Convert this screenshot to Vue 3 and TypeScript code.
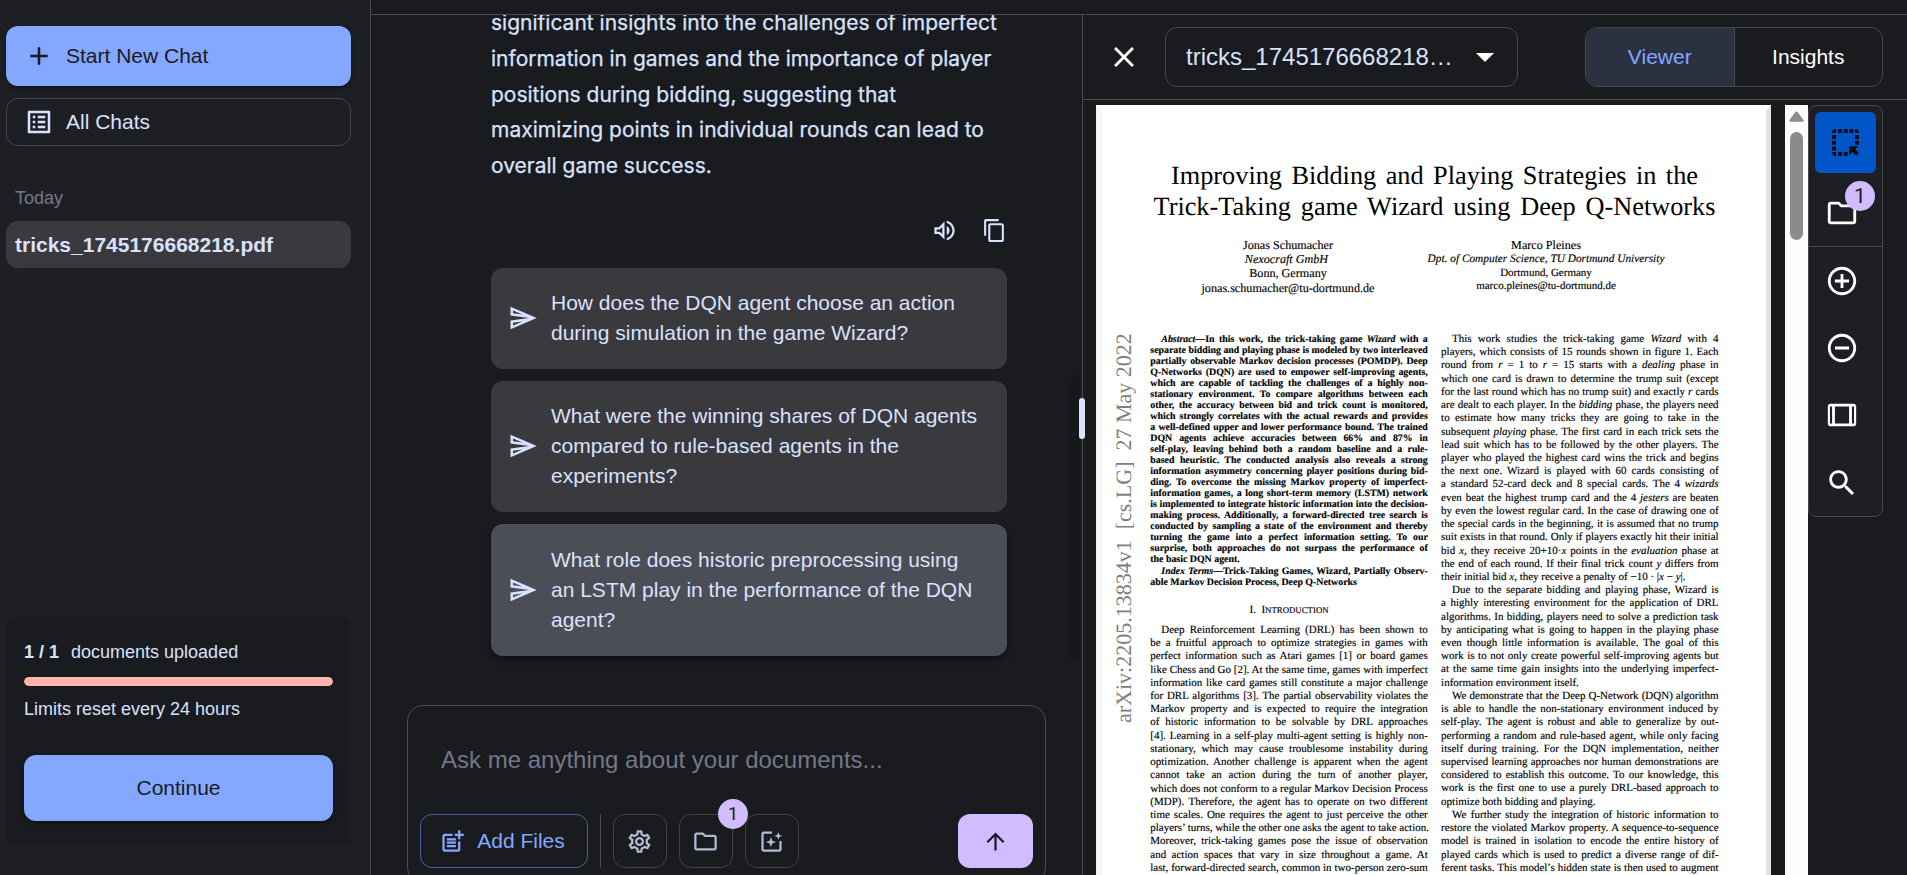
<script setup lang="ts">
import { computed, ref } from 'vue'

interface Segment { text: string; italic: boolean }
interface Line { segments: Segment[]; indent: boolean; last: boolean }

// Typeset line markup: "*x*" is italic, a leading ">" indents, a trailing "|" ends a paragraph.
function parse(raw: string): Line {
  const indent = raw.startsWith('>')
  const last = raw.endsWith('|')
  const body = raw.slice(indent ? 1 : 0, last ? -1 : undefined)
  const segments = body
    .split('*')
    .map((text, i) => ({ text, italic: i % 2 === 1 }))
    .filter((s) => s.text.length > 0)
  return { segments, indent, last }
}

const fileName = 'tricks_1745176668218'
const documentCount = ref(1)
const documentLimit = 1
const usage = computed(() => `${(documentCount.value / documentLimit) * 100}%`)

const answer = [
  'significant insights into the challenges of imperfect',
  'information in games and the importance of player',
  'positions during bidding, suggesting that',
  'maximizing points in individual rounds can lead to',
  'overall game success.',
]

const suggestions = [
  ['How does the DQN agent choose an action', 'during simulation in the game Wizard?'],
  ['What were the winning shares of DQN agents', 'compared to rule-based agents in the', 'experiments?'],
  ['What role does historic preprocessing using', 'an LSTM play in the performance of the DQN', 'agent?'],
]

const abstractLines = [
  '>*Abstract*—In this work, the trick-taking game *Wizard* with a',
  'separate bidding and playing phase is modeled by two interleaved',
  'partially observable Markov decision processes (POMDP). Deep',
  'Q-Networks (DQN) are used to empower self-improving agents,',
  'which are capable of tackling the challenges of a highly non-',
  'stationary environment. To compare algorithms between each',
  'other, the accuracy between bid and trick count is monitored,',
  'which strongly correlates with the actual rewards and provides',
  'a well-defined upper and lower performance bound. The trained',
  'DQN agents achieve accuracies between 66% and 87% in',
  'self-play, leaving behind both a random baseline and a rule-',
  'based heuristic. The conducted analysis also reveals a strong',
  'information asymmetry concerning player positions during bid-',
  'ding. To overcome the missing Markov property of imperfect-',
  'information games, a long short-term memory (LSTM) network',
  'is implemented to integrate historic information into the decision-',
  'making process. Additionally, a forward-directed tree search is',
  'conducted by sampling a state of the environment and thereby',
  'turning the game into a perfect information setting. To our',
  'surprise, both approaches do not surpass the performance of',
  'the basic DQN agent.|',
].map(parse)

const indexLines = [
  '>*Index Terms*—Trick-Taking Games, Wizard, Partially Observ-',
  'able Markov Decision Process, Deep Q-Networks|',
].map(parse)

const introLines = [
  '>Deep Reinforcement Learning (DRL) has been shown to',
  'be a fruitful approach to optimize strategies in games with',
  'perfect information such as Atari games [1] or board games',
  'like Chess and Go [2]. At the same time, games with imperfect',
  'information like card games still constitute a major challenge',
  'for DRL algorithms [3]. The partial observability violates the',
  'Markov property and is expected to require the integration',
  'of historic information to be solvable by DRL approaches',
  '[4]. Learning in a self-play multi-agent setting is highly non-',
  'stationary, which may cause troublesome instability during',
  'optimization. Another challenge is apparent when the agent',
  'cannot take an action during the turn of another player,',
  'which does not conform to a regular Markov Decision Process',
  '(MDP). Therefore, the agent has to operate on two different',
  'time scales. One requires the agent to just perceive the other',
  'players’ turns, while the other one asks the agent to take action.',
  'Moreover, trick-taking games pose the issue of observation',
  'and action spaces that vary in size throughout a game. At',
  'last, forward-directed search, common in two-person zero-sum',
].map(parse)

const rightLines = [
  '>This work studies the trick-taking game *Wizard* with 4',
  'players, which consists of 15 rounds shown in figure 1. Each',
  'round from *r* = 1 to *r* = 15 starts with a *dealing* phase in',
  'which one card is drawn to determine the trump suit (except',
  'for the last round which has no trump suit) and exactly *r* cards',
  'are dealt to each player. In the *bidding* phase, the players need',
  'to estimate how many tricks they are going to take in the',
  'subsequent *playing* phase. The first card in each trick sets the',
  'lead suit which has to be followed by the other players. The',
  'player who played the highest card wins the trick and begins',
  'the next one. Wizard is played with 60 cards consisting of',
  'a standard 52-card deck and 8 special cards. The 4 *wizards*',
  'even beat the highest trump card and the 4 *jesters* are beaten',
  'by even the lowest regular card. In the case of drawing one of',
  'the special cards in the beginning, it is assumed that no trump',
  'suit exists in that round. Only if players exactly hit their initial',
  'bid *x*, they receive 20+10·*x* points in the *evaluation* phase at',
  'the end of each round. If their final trick count *y* differs from',
  'their initial bid *x*, they receive a penalty of −10 · |*x* − *y*|.|',
  '>Due to the separate bidding and playing phase, Wizard is',
  'a highly interesting environment for the application of DRL',
  'algorithms. In bidding, players need to solve a prediction task',
  'by anticipating what is going to happen in the playing phase',
  'even though little information is available. The goal of this',
  'work is to not only create powerful self-improving agents but',
  'at the same time gain insights into the underlying imperfect-',
  'information environment itself.|',
  '>We demonstrate that the Deep Q-Network (DQN) algorithm',
  'is able to handle the non-stationary environment induced by',
  'self-play. The agent is robust and able to generalize by out-',
  'performing a random and rule-based agent, while only facing',
  'itself during training. For the DQN implementation, neither',
  'supervised learning approaches nor human demonstrations are',
  'considered to establish this outcome. To our knowledge, this',
  'work is the first one to use a purely DRL-based approach to',
  'optimize both bidding and playing.|',
  '>We further study the integration of historic information to',
  'restore the violated Markov property. A sequence-to-sequence',
  'model is trained in isolation to encode the entire history of',
  'played cards which is used to predict a diverse range of dif-',
  'ferent tasks. This model’s hidden state is then used to augment',
].map(parse)

const leftBlocks = [
  { cls: 'abstract', lines: abstractLines },
  { cls: 'abstract index', lines: indexLines },
]
</script>

<template>
  <div class="app">
    <aside class="sidebar">
      <button class="btn primary new-chat">
        <svg class="i30" viewBox="0 0 24 24"><path d="M19 13h-6v6h-2v-6H5v-2h6V5h2v6h6z" /></svg>
        <span>Start New Chat</span>
      </button>
      <button class="btn outline all-chats">
        <svg class="i30" viewBox="0 0 24 24"><path d="M11 7h6v2h-6zm0 4h6v2h-6zm0 4h6v2h-6zM7 7h2v2H7zm0 4h2v2H7zm0 4h2v2H7zM20.1 3H3.9c-.5 0-.9.4-.9.9v16.2c0 .4.4.9.9.9h16.2c.4 0 .9-.5.9-.9V3.9c0-.5-.5-.9-.9-.9M19 19H5V5h14z" /></svg>
        <span>All Chats</span>
      </button>
      <div class="group">Today</div>
      <div class="history">{{ fileName }}.pdf</div>
      <div class="spacer"></div>
      <section class="limits">
        <div class="count"><b>{{ documentCount }} / {{ documentLimit }}</b><span>documents uploaded</span></div>
        <div class="bar"><div class="fill" :style="{ width: usage }"></div></div>
        <div class="reset">Limits reset every 24 hours</div>
        <button class="btn primary continue">Continue</button>
      </section>
    </aside>

    <main class="main">
      <div class="strip"></div>
      <div class="split">
        <section class="chat">
          <div class="messages">
            <div class="answer"><div v-for="l in answer" :key="l">{{ l }}</div></div>
            <div class="actions">
              <svg class="speak" viewBox="0 0 24 24"><path d="M3 9v6h4l5 5V4L7 9zm7-.17v6.34L7.83 13H5v-2h2.83zM16.5 12c0-1.77-1.02-3.29-2.5-4.03v8.05c1.48-.73 2.5-2.25 2.5-4.02M14 3.23v2.06c2.89.86 5 3.54 5 6.71s-2.11 5.85-5 6.71v2.06c4.01-.91 7-4.49 7-8.77s-2.99-7.86-7-8.77" /></svg>
              <svg class="copy" viewBox="0 0 24 24"><path d="M16 1H4c-1.1 0-2 .9-2 2v14h2V3h12zm3 4H8c-1.1 0-2 .9-2 2v14c0 1.1.9 2 2 2h11c1.1 0 2-.9 2-2V7c0-1.100-.9-2-2-2m0 16H8V7h11z" /></svg>
            </div>
            <div class="suggestions">
              <div v-for="(s, i) in suggestions" :key="i" class="card" :class="{ hovered: i === 2 }">
                <svg class="i30" viewBox="0 0 24 24"><path d="m4.010 6.030 7.510 3.220-7.520-1zm7.500 8.720L4 17.970v-2.220zM2.010 3 2 10l15 2-15 2 .010 7L23 12z" /></svg>
                <div><div v-for="l in s" :key="l">{{ l }}</div></div>
              </div>
            </div>
          </div>
          <div class="composer">
            <div class="placeholder">Ask me anything about your documents...</div>
            <div class="tools">
              <button class="btn add">
                <svg class="i27" viewBox="0 0 24 24"><path d="M17 19.220H5V7h7V5H5c-1.100 0-2 .9-2 2v12c0 1.100.9 2 2 2h12c1.100 0 2-.9 2-2v-7h-2z" /><path d="M19 2h-2v3h-3v2h3v2.990h2V7h3V5h-3zM7 9h8v2H7zm0 3v2h8v-2zm0 3h8v2H7z" /></svg>
                <span>Add Files</span>
              </button>
              <i class="rule"></i>
              <button class="btn square">
                <svg class="i27" viewBox="0 0 24 24"><path d="M19.430 12.980c.04-.32.070-.64.070-.98s-.03-.66-.07-.98l2.110-1.650c.19-.15.24-.42.12-.64l-2-3.460c-.09-.16-.26-.25-.44-.25-.06 0-.12.010-.17.030l-2.490 1c-.52-.4-1.080-.73-1.690-.98l-.38-2.650C14.460 2.180 14.250 2 14 2h-4c-.25 0-.46.18-.49.42l-.38 2.650c-.61.25-1.170.59-1.690.98l-2.490-1c-.06-.02-.12-.03-.18-.03-.17 0-.34.090-.43.250l-2 3.460c-.13.22-.07.49.12.64l2.110 1.650c-.04.32-.07.65-.07.98s.03.66.07.98l-2.110 1.650c-.19.15-.24.42-.12.64l2 3.460c.09.16.26.25.44.25.06 0 .12-.01.17-.03l2.490-1c.52.4 1.080.73 1.690.98l.38 2.650c.03.24.24.42.49.42h4c.25 0 .46-.18.49-.42l.38-2.650c.61-.25 1.170-.59 1.690-.98l2.490 1c.06.020.12.030.18.030.17 0 .34-.09.43-.25l2-3.460c.12-.22.070-.49-.12-.64zm-1.980-1.710c.04.31.050.52.050.73s-.02.43-.05.73l-.14 1.130.89.7 1.080.84-.7 1.210-1.270-.51-1.040-.42-.9.680c-.43.32-.84.56-1.250.73l-1.060.43-.16 1.130-.2 1.350h-1.400l-.19-1.350-.16-1.130-1.060-.43c-.43-.18-.83-.41-1.230-.71l-.91-.7-1.060.43-1.270.51-.7-1.210 1.080-.84.89-.7-.14-1.130c-.03-.31-.05-.54-.05-.74s.02-.43.05-.73l.14-1.130-.89-.7-1.080-.84.7-1.210 1.270.51 1.040.42.9-.68c.43-.32.84-.56 1.250-.73l1.060-.43.16-1.130.2-1.350h1.390l.19 1.350.16 1.130 1.060.43c.43.18.83.41 1.230.71l.91.7 1.060-.43 1.270-.51.7 1.210-1.070.85-.89.7zM12 8c-2.210 0-4 1.790-4 4s1.790 4 4 4 4-1.790 4-4-1.790-4-4-4m0 6c-1.100 0-2-.9-2-2s.9-2 2-2 2 .9 2 2-.9 2-2 2" /></svg>
              </button>
              <button class="btn square">
                <svg class="i27" viewBox="0 0 24 24"><path d="m9.170 6 2 2H20v10H4V6zM10 4H4c-1.100 0-1.990.9-1.990 2L2 18c0 1.100.9 2 2 2h16c1.100 0 2-.9 2-2V8c0-1.100-.9-2-2-2h-8z" /></svg>
                <span class="badge">{{ documentCount }}</span>
              </button>
              <button class="btn square">
                <svg class="i27" viewBox="0 0 24 24"><path d="M12.500 3H5c-1.100 0-2 .9-2 2v14c0 1.100.9 2 2 2h14c1.100 0 2-.9 2-2v-7.500h-2V19H5V5h7.500z" /><path d="m18 3.500.9 2.600 2.600.9-2.600.9L18 10.500l-.9-2.600-2.600-.9 2.600-.9zM11.500 8l1.200 3.300L16 12.500l-3.300 1.200-1.200 3.300-1.200-3.300L7 12.500l3.300-1.200z" /></svg>
              </button>
              <div class="spacer"></div>
              <button class="btn send">
                <svg class="i27" viewBox="0 0 24 24"><path d="m4 12 1.410 1.410L11 7.830V20h2V7.830l5.580 5.590L20 12l-8-8z" /></svg>
              </button>
            </div>
          </div>
          <div class="track"></div>
          <div class="handle"></div>
        </section>

        <section class="viewer">
          <header class="head">
            <svg class="close" viewBox="0 0 24 24"><path d="M19 6.410 17.590 5 12 10.590 6.410 5 5 6.410 10.590 12 5 17.590 6.410 19 12 13.410 17.590 19 19 17.590 13.410 12z" /></svg>
            <div class="select">
              <span>{{ fileName }}…</span>
              <svg viewBox="0 0 20 10"><path d="M0 0h20L10 10z" /></svg>
            </div>
            <div class="spacer"></div>
            <div class="toggle"><span class="on">Viewer</span><span>Insights</span></div>
          </header>
          <div class="body">
            <div class="canvas">
              <div class="paper">
                <h1><div class="t1">Improving Bidding and Playing Strategies in the</div><div class="t2">Trick-Taking game Wizard using Deep Q-Networks</div></h1>
                <div class="authors">
                  <div class="a1"><div>Jonas Schumacher</div><div class="org"><em>Nexocraft GmbH</em></div><div>Bonn, Germany</div><div>jonas.schumacher@tu-dortmund.de</div></div>
                  <div class="a2"><div class="name">Marco Pleines</div><div class="dept"><em>Dpt. of Computer Science, TU Dortmund University</em></div><div>Dortmund, Germany</div><div>marco.pleines@tu-dortmund.de</div></div>
                </div>
                <div class="stamp"><span>arXiv:2205.13834v1&nbsp; [cs.LG]&nbsp; 27 May 2022</span></div>
                <div class="columns">
                  <div class="col">
                    <div v-for="b in leftBlocks" :key="b.cls" :class="b.cls">
                      <div v-for="(l, i) in b.lines" :key="i" class="line" :class="{ indent: l.indent, last: l.last }"><span v-for="(s, k) in l.segments" :key="k" :class="{ it: s.italic }">{{ s.text }}</span></div>
                    </div>
                    <div class="heading">I.&nbsp; I<small>NTRODUCTION</small></div>
                    <div v-for="(l, i) in introLines" :key="i" class="line" :class="{ indent: l.indent, last: l.last }"><span v-for="(s, k) in l.segments" :key="k" :class="{ it: s.italic }">{{ s.text }}</span></div>
                  </div>
                  <div class="col">
                    <div v-for="(l, i) in rightLines" :key="i" class="line" :class="{ indent: l.indent, last: l.last }"><span v-for="(s, k) in l.segments" :key="k" :class="{ it: s.italic }">{{ s.text }}</span></div>
                  </div>
                </div>
              </div>
            </div>
            <div class="scroll">
              <svg viewBox="0 0 15 11"><path d="M6.300 1.200q1.200-1.500 2.400 0l5.600 7.600q.9 2-1 2H1.700q-1.900 0-1-2z" /></svg>
              <div class="thumb"></div>
            </div>
            <div class="toolbar">
              <div class="tool active">
                <svg viewBox="0 0 27 27"><path d="M0 4q0-4 4-4v4zM6 0h4v4H6zm5.700 0h4v4h-4zm5.700 0h4v4h-4zM23 0q4 0 4 4h-4zm0 6h4v4h-4zm0 5.700h4v4h-4zM0 6h4v4H0zm0 5.700h4v4H0zm0 5.700h4v4H0zM0 23h4v4q-4 0-4-4m6 0h4v4H6zm5.700 0h4v4h-4zM17.300 17.300h9l-3 3 3.700 3.700-2.700 2.700-3.800-3.700-3.200 3.200z" /></svg>
              </div>
              <div class="tool folder">
                <svg viewBox="0 0 24 24"><path d="m9.170 6 2 2H20v10H4V6zM10 4H4c-1.100 0-1.990.9-1.990 2L2 18c0 1.100.9 2 2 2h16c1.100 0 2-.9 2-2V8c0-1.100-.9-2-2-2h-8z" /></svg>
                <span class="badge">{{ documentCount }}</span>
              </div>
              <i class="hr"></i>
              <div class="tool"><svg viewBox="0 0 24 24"><path d="M13 7h-2v4H7v2h4v4h2v-4h4v-2h-4zm-1-5C6.480 2 2 6.480 2 12s4.480 10 10 10 10-4.480 10-10S17.520 2 12 2m0 18c-4.410 0-8-3.590-8-8s3.590-8 8-8 8 3.590 8 8-3.590 8-8 8" /></svg></div>
              <div class="tool"><svg viewBox="0 0 24 24"><path d="M7 11v2h10v-2zm5-9C6.480 2 2 6.480 2 12s4.480 10 10 10 10-4.480 10-10S17.520 2 12 2m0 18c-4.410 0-8-3.590-8-8s3.590-8 8-8 8 3.590 8 8-3.590 8-8 8" /></svg></div>
              <div class="tool"><svg viewBox="0 0 24 24"><path fill-rule="evenodd" d="M4 4h16q2 0 2 2v12q0 2-2 2H4q-2 0-2-2V6q0-2 2-2m-.5 2v12H5V6zm3.500 0v12h10V6zm12 0v12h1.500V6z" /></svg></div>
              <div class="tool search"><svg viewBox="0 0 24 24"><path d="M15.500 14h-.79l-.28-.27C15.410 12.590 16 11.110 16 9.500 16 5.910 13.090 3 9.500 3S3 5.910 3 9.500 5.910 16 9.500 16c1.610 0 3.090-.59 4.230-1.570l.27.28v.79l5 4.990L20.490 19zm-6 0C7.010 14 5 11.990 5 9.500S7.010 5 9.500 5 14 7.010 14 9.500 11.990 14 9.500 14" /></svg></div>
            </div>
          </div>
        </section>
      </div>
    </main>
  </div>
</template>

<style>
html, body { margin: 0; overflow: hidden; background: #1b1b1f; }
</style>

<style scoped>
* { box-sizing: border-box; }
.app { display: flex; width: 1907px; height: 875px; overflow: hidden; background: #1a1b1f; color: #d9e2ff; font-family: "Liberation Sans", Arial, sans-serif; font-size: 21px; white-space: nowrap; }
svg { display: block; flex: none; fill: currentColor; }
.i30 { width: 30px; height: 30px; }
.i27 { width: 27px; height: 27px; }
.spacer { flex: 1; }
.btn { display: flex; align-items: center; border: 0; padding: 0; background: none; color: inherit; font: inherit; border-radius: 12px; flex: none; }
.primary { background: #84a8ff; color: #1a1b1f; box-shadow: 0 2px 4px rgba(0, 0, 0, .4); }
.outline { border: 1px solid #47484e; }

.sidebar { display: flex; flex-direction: column; width: 371px; flex: none; padding: 26px 19px 30px 6px; background: #1e1f24; border-right: 1px solid #4a4b51; }
.new-chat { height: 60px; padding-left: 18px; gap: 12px; }
.all-chats { height: 48px; margin-top: 12px; padding-left: 17px; gap: 12px; }
.group { margin-top: 40px; padding-left: 9px; font-size: 18px; line-height: 24px; color: #757789; }
.history { height: 47px; margin-top: 11px; padding-left: 9px; line-height: 47px; font-weight: 700; background: #3a393d; border-radius: 12px; }
.limits { height: 228px; padding: 24px 18px; background: #1a1b1f; border-radius: 8px; font-size: 18px; }
.count { display: flex; gap: 12px; line-height: 22px; }
.bar { height: 9px; margin-top: 14px; border-radius: 5px; overflow: hidden; }
.fill { height: 9px; border-radius: 5px; background: #ffb4ab; }
.reset { margin-top: 12px; line-height: 22px; }
.continue { width: 309px; height: 66px; margin-top: 35px; justify-content: center; font-size: 21px; }

.main { flex: 1; min-width: 0; display: flex; flex-direction: column; }
.strip { height: 15px; flex: none; border-bottom: 1px solid #4a4b51; }
.split { flex: 1; display: flex; min-height: 0; }
.chat { position: relative; width: 712px; flex: none; display: flex; flex-direction: column; border-right: 1px solid #4a4b51; }
.messages { height: 690px; flex: none; padding: 0 75px 0 120px; overflow: hidden; }
.answer { margin-top: -10px; font-family: Inter, sans-serif; line-height: 35.800px; -webkit-text-stroke: .25px; }
.actions { display: flex; align-items: center; justify-content: flex-end; height: 26px; margin-top: 33.500px; gap: 24px; }
.speak { width: 27px; height: 27px; }
.copy { width: 25px; height: 25px; }
.suggestions { display: flex; flex-direction: column; gap: 12px; margin-top: 24.500px; }
.card { display: flex; align-items: center; gap: 13px; padding: 20.200px 17px 21px; line-height: 30px; background: #3a393d; border-radius: 12px; }
.hovered { background: #4b4e56; box-shadow: 0 3px 6px rgba(0, 0, 0, .45); }
.composer { display: flex; flex-direction: column; width: 639px; height: 179px; margin: 0 0 0 36px; padding: 39px 12px 14px; flex: none; border: 1px solid #4a4b51; border-radius: 16px; }
.placeholder { padding-left: 21px; font-size: 24px; line-height: 30px; color: #757789; }
.tools { display: flex; align-items: center; margin-top: 39px; height: 54px; }
.tools .btn { height: 54px; justify-content: center; }
.tools .add { width: 168px; gap: 11px; padding-right: 4px; color: #84a8ff; border: 1px solid #46619f; }
.rule { width: 1px; height: 54px; margin: 0 12px; background: #4a4b51; }
.tools .square { position: relative; width: 54px; margin-right: 12px; padding-right: 2px; border: 1px solid #414248; color: #b3bad2; }
.tools .send { width: 75px; background: #d0bcff; color: #1a1b1f; }
.badge { position: absolute; width: 30px; height: 30px; border-radius: 50%; background: #d0bcff; color: #1a1b1f; font: 18px/30px Roboto, sans-serif; text-align: center; z-index: 2; }
.square .badge { top: -16px; right: -16px; }
.track { position: absolute; left: 699px; top: 360px; width: 9px; height: 287px; border-radius: 5px; background: #17181c; }
.handle { position: absolute; left: 708px; top: 383px; width: 6px; height: 41px; border-radius: 3px; background: #d9e2ff; z-index: 3; }

.viewer { flex: 1; min-width: 0; display: flex; flex-direction: column; }
.head { display: flex; align-items: center; height: 85px; flex: none; padding: 0 24px; border-bottom: 1px solid #4a4b51; color: #fff; }
.close { width: 34px; height: 34px; margin-right: 24px; }
.select { display: flex; align-items: center; justify-content: space-between; width: 353px; height: 60px; padding: 0 23px 0 20px; border: 1px solid #47484e; border-radius: 12px; font-size: 24px; }
.select span { color: #d9e2ff; }
.select svg { width: 18px; height: 9px; margin-top: 1px; }
.toggle { display: flex; width: 298px; height: 60px; line-height: 58px; text-align: center; border: 1px solid #47484e; border-radius: 12px; overflow: hidden; }
.toggle span { flex: 1; }
.toggle .on { background: #2c3142; color: #84a8ff; border-right: 1px solid #47484e; }
.body { display: flex; flex: 1; min-height: 0; padding-top: 5px; }
.canvas { width: 702px; flex: none; padding-left: 13px; padding-right: 14px; background: #1a1a1a; overflow: hidden; }
.paper { position: relative; height: 100%; border: solid; border-width: 6px 5px 0 6px; border-color: #fbfbfb #e2e2e2 #fbfbfb #f5f5f5; background: #fff; color: #000; font: 11px/13.215px "Liberation Serif", "Times New Roman", serif; overflow: hidden; text-rendering: geometricPrecision; }
h1 { margin: 49px 0 0; font-size: 26.300px; line-height: 31px; font-weight: 400; }
.t1, .t2 { text-align: justify; text-align-last: justify; }
.t1 { width: 527px; margin-left: 69px; }
.t2 { width: 562px; margin-left: 51.500px; }
.authors { display: flex; height: 60px; margin-top: 16px; text-align: center; font-size: 12.150px; line-height: 14.200px; -webkit-text-stroke: .15px; }
.a1 { width: 200px; margin-left: 86px; }
.org { padding-right: 3px; }
.a2 { width: 260px; margin-left: 28px; font-size: 11px; line-height: 13.600px; }
.a2 .name { font-size: 12.150px; line-height: 15px; }
.a2 .dept { font-size: 11.350px; }
.stamp { position: absolute; left: 11px; top: 221.500px; height: 390px; width: 22px; writing-mode: vertical-rl; transform: rotate(180deg); font-size: 22px; line-height: 22px; color: #7f7f7f; }
.columns { display: flex; gap: 13.300px; margin: 35px 0 0 48.300px; -webkit-text-stroke: .15px; }
.col { width: 277.500px; flex: none; }
.line { text-align: justify; text-align-last: justify; }
.line.last { text-align-last: left; }
.indent { padding-left: 11px; }
.it { font-style: italic; }
.abstract { font-size: 9.900px; line-height: 11px; font-weight: 700; }
.abstract:first-child { margin-top: 1.200px; }
.index { margin-top: 1px; }
.heading { margin: 15.500px 0 7px; text-align: center; }
.heading small { font-size: 8.800px; }
.scroll { width: 23px; flex: none; padding: 6px 5px 0; background: #fcfcfc; }
.scroll svg { width: 15px; height: 11px; margin-left: -1px; fill: #8b8b8b; }
.thumb { width: 13px; height: 108px; margin-top: 10px; border-radius: 7px; background: #8b8b8b; }
.toolbar { width: 75px; height: 412px; flex: none; padding: 6px; background: #1e1f24; border: 1px solid #47484e; border-radius: 8px; color: #fff; }
.tool { position: relative; display: flex; align-items: center; justify-content: center; height: 67px; padding-right: 7px; }
.tool svg { width: 34px; height: 34px; }
.active { height: 61px; padding-right: 0; border-radius: 6px; background: #0056c8; color: #0b0d12; }
.active svg { width: 27px; height: 27px; }
.folder { height: 73px; padding-top: 6px; }
.folder .badge { left: 30px; top: 8px; font-size: 21px; }
.search { padding-top: 2px; }
.hr { display: block; height: 1px; margin: 0 -6px; background: #47484e; }
</style>
